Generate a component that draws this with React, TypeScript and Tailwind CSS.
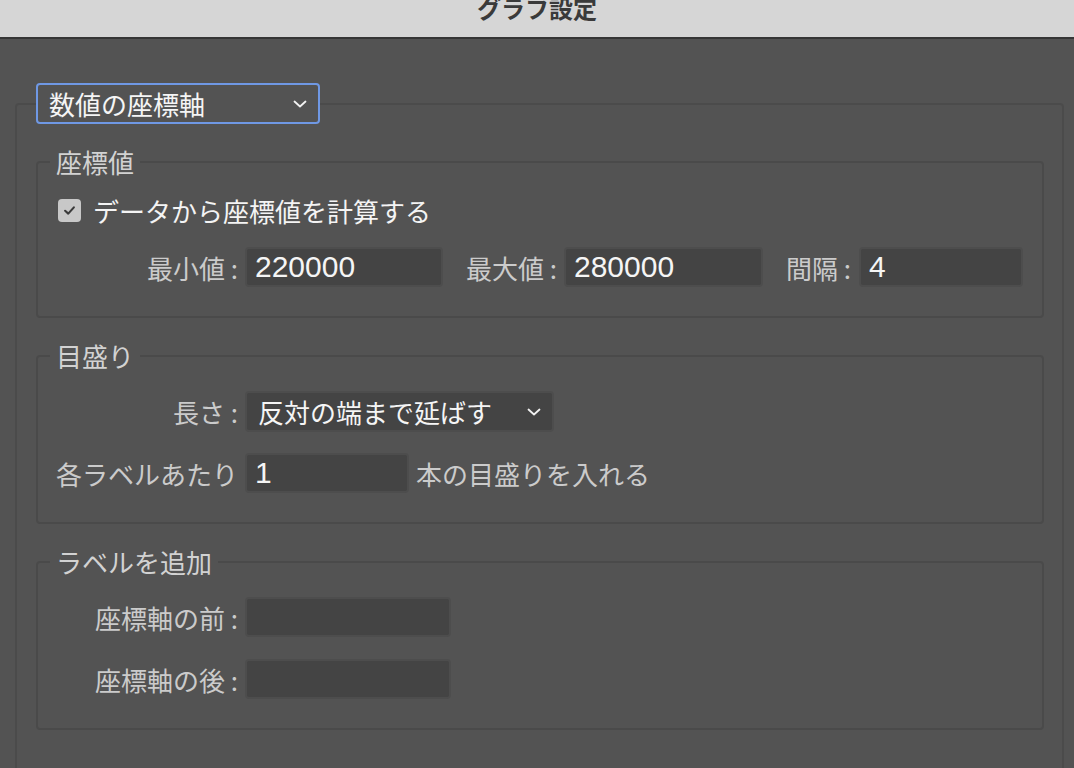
import { ReactNode } from 'react'

function Chevron() {
  return (
    <svg width="14" height="8" viewBox="0 0 14 8" fill="none" className="shrink-0">
      <path d="M1.5 1.5 L7 6.5 L12.5 1.5" stroke="#f2f2f2" strokeWidth="1.8" strokeLinecap="round" strokeLinejoin="round" />
    </svg>
  )
}

function Field({ value = '', className = '' }: { value?: string; className?: string }) {
  return (
    <input
      readOnly
      value={value}
      className={`h-[40px] bg-[#444444] border-2 border-[#4d4d4d] rounded-[4px] pl-[8px] text-[30px] leading-none font-['Liberation_Sans',sans-serif] text-[#f5f5f5] outline-none ${className}`}
    />
  )
}

function Section({ title, className = '', children }: { title: string; className?: string; children: ReactNode }) {
  return (
    <fieldset className={`border-2 border-[#4a4a4a] rounded-[4px] pl-[12px] pr-[18px] pb-[29px] ${className}`}>
      <legend className="px-[6px] text-[26px] leading-[31px] text-[#d2d2d2]">{title}</legend>
      <div className="pl-[6px]">{children}</div>
    </fieldset>
  )
}

function Label({ children, className = 'w-[182px]' }: { children: ReactNode; className?: string }) {
  return <div className={`text-right text-[26px] leading-[31px] text-[#cbcbcb] shrink-0 whitespace-nowrap ${className}`}>{children}</div>
}

export default function App() {
  return (
    <div className="min-h-screen overflow-hidden bg-[#535353] font-['Noto_Sans_CJK_JP',sans-serif]">
      <div className="h-[39px] bg-[#d6d6d6] border-b-2 border-[#363636] flex justify-center overflow-hidden">
        <div className="-mt-[7px] text-[24px] font-bold leading-[30px] text-[#3a3a3a]">グラフ設定</div>
      </div>

      <fieldset className="mt-[44px] ml-[15px] mr-[10px] border-2 border-[#4b4b4b] rounded-[4px] pl-[19px] pr-[18px] pb-[40px]">
        <legend className="p-0">
          <div className="h-[41px] w-[284px] border-2 border-[#6f98e4] rounded-[4px] bg-[#535353] flex items-center justify-between pl-[11px] pr-[11px]">
            <span className="text-[26px] leading-none text-[#f5f5f5]">数値の座標軸</span>
            <Chevron />
          </div>
        </legend>

        <Section title="座標値" className="mt-[22px]">
          <div className="mt-[17px] h-[32px] flex items-center">
            <div className="ml-[2px] w-[23px] h-[23px] rounded-[4px] bg-[#c8c8c8] flex items-center justify-center">
              <svg width="15" height="15" viewBox="0 0 24 24" fill="none">
                <path d="M5 12.5 L10 17 L19 7" stroke="#3b3b3b" strokeWidth="3.4" strokeLinecap="round" strokeLinejoin="round" />
              </svg>
            </div>
            <span className="ml-[12px] text-[26px] leading-[31px] text-[#f4f4f4]">データから座標値を計算する</span>
          </div>
          <div className="mt-[21px] flex items-center">
            <Label>最小値 :</Label>
            <Field value="220000" className="ml-[7px] w-[198px]" />
            <Label className="w-[114px]">最大値 :</Label>
            <Field value="280000" className="ml-[7px] w-[199px]" />
            <Label className="w-[88px]">間隔 :</Label>
            <Field value="4" className="ml-[8px] w-[164px]" />
          </div>
        </Section>

        <Section title="目盛り" className="mt-[22px]">
          <div className="mt-[20px] flex items-center">
            <Label>長さ :</Label>
            <div className="ml-[7px] h-[41px] w-[309px] bg-[#444444] border-2 border-[#4d4d4d] rounded-[4px] flex items-center justify-between pl-[11px] pr-[11px]">
              <span className="text-[26px] leading-none text-[#f5f5f5]">反対の端まで延ばす</span>
              <Chevron />
            </div>
          </div>
          <div className="mt-[21px] flex items-center">
            <Label>各ラベルあたり</Label>
            <Field value="1" className="ml-[7px] w-[164px]" />
            <span className="ml-[7px] text-[26px] leading-[31px] text-[#cbcbcb]">本の目盛りを入れる</span>
          </div>
        </Section>

        <Section title="ラベルを追加" className="mt-[22px]">
          <div className="mt-[20px] flex items-center">
            <Label>座標軸の前 :</Label>
            <Field className="ml-[7px] w-[206px]" />
          </div>
          <div className="mt-[22px] flex items-center">
            <Label>座標軸の後 :</Label>
            <Field className="ml-[7px] w-[206px]" />
          </div>
        </Section>
      </fieldset>
    </div>
  )
}
